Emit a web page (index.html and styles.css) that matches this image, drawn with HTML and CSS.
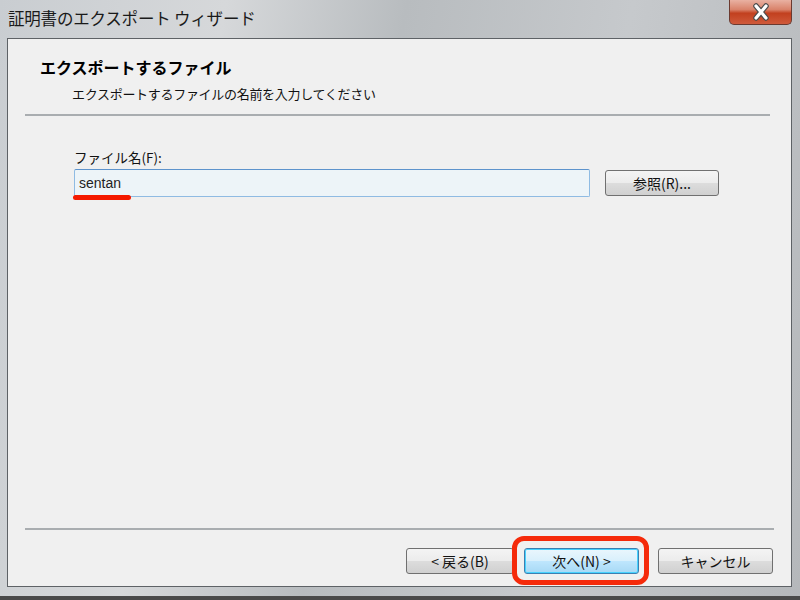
FILE: index.html
```html
<!DOCTYPE html>
<html lang="ja">
<head>
<meta charset="utf-8">
<title>証明書のエクスポート ウィザード</title>
<link rel="stylesheet" href="styles.css">
</head>
<body>
<div class="window">
  <div class="titlebar">
    <div class="title">証明書のエクスポート ウィザード</div>
    <div class="close">
      <svg width="26" height="18" viewBox="0 0 26 18">
        <path d="M8 3 L18 15 M18 3 L8 15" stroke="#4a4a4a" stroke-width="5.5" stroke-linecap="round"/>
        <path d="M8 3 L18 15 M18 3 L8 15" stroke="#ffffff" stroke-width="3.2" stroke-linecap="round"/>
      </svg>
    </div>
  </div>
  <div class="client">
    <div class="header">
      <div class="h-title">エクスポートするファイル</div>
      <div class="h-sub">エクスポートするファイルの名前を入力してください</div>
    </div>
    <div class="sep sep-top"></div>
    <div class="content">
      <div class="label">ファイル名(F):</div>
      <div class="row">
        <div class="input"><span class="value">sentan</span><span class="mark"></span></div>
        <div class="btn browse">参照(R)...</div>
      </div>
    </div>
    <div class="sep sep-bottom"></div>
    <div class="footer">
      <div class="btn back">&lt; 戻る(B)</div>
      <div class="btn next">次へ(N) &gt;<span class="ring"></span></div>
      <div class="btn cancel">キャンセル</div>
    </div>
  </div>
</div>
</body>
</html>
```
FILE: styles.css
```css
html, body {
  margin: 0;
  padding: 0;
}
body {
  width: 800px;
  height: 600px;
  overflow: hidden;
  font-family: "Noto Sans CJK JP", "Liberation Sans", sans-serif;
  color: #111;
}
.window {
  width: 800px;
  height: 600px;
  box-sizing: border-box;
  background: linear-gradient(100deg, #c9cdd1 0%, #d6d8da 25%, #b8bcbf 45%, #c6c9cc 70%, #b5b8bb 100%);
  display: flex;
  flex-direction: column;
  border-bottom: 4px solid #4a4a4a;
}
.titlebar {
  height: 38px;
  display: flex;
  justify-content: space-between;
  align-items: flex-start;
  flex: none;
}
.title {
  padding-left: 8px;
  padding-top: 6px;
  font-size: 16.5px;
  line-height: 24px;
  color: #1a1a1a;
  letter-spacing: -0.2px;
}
.close {
  margin-right: 8px;
  width: 63px;
  height: 25px;
  box-sizing: border-box;
  border: 1px solid #6b3a30;
  border-top: none;
  border-radius: 0 0 5px 5px;
  background: linear-gradient(#e9b1a2 0%, #d9826a 40%, #c2401f 55%, #cf5a3b 100%);
  display: flex;
  align-items: center;
  justify-content: center;
}
.client {
  margin: 0 8px 0 7px;
  height: 549px;
  box-sizing: border-box;
  border: 1px solid #5e6266;
  background: #f0f0f0;
  display: flex;
  flex-direction: column;
}
.header {
  padding: 18px 0 0 32px;
  height: 71px;
  box-sizing: border-box;
}
.h-title {
  font-size: 16px;
  font-weight: bold;
  line-height: 20px;
  color: #000;
}
.h-sub {
  margin-top: 8px;
  padding-left: 32px;
  font-size: 13px;
  line-height: 18px;
  letter-spacing: -0.3px;
}
.sep {
  height: 0;
  border-top: 2px solid #a9adb0;
  flex: none;
}
.sep-top {
  margin: 4px 21px 0 17px;
}
.sep-bottom {
  margin: 0 17px 0 17px;
}
.content {
  flex: 1;
  padding: 32px 0 0 66px;
  box-sizing: border-box;
}
.label {
  font-size: 13.5px;
  line-height: 18px;
  letter-spacing: 0;
}
.row {
  margin-top: 3px;
  display: flex;
  align-items: flex-start;
}
.input {
  position: relative;
  width: 516px;
  height: 28px;
  box-sizing: border-box;
  background: #edf4f8;
  border: 1px solid #8fbbe3;
  border-top-color: #5d93cc;
  border-radius: 2px;
  padding-left: 4px;
  display: flex;
  align-items: center;
}
.value {
  font-family: "Liberation Sans", "Noto Sans", sans-serif;
  font-size: 14px;
  color: #222;
}
.mark {
  position: absolute;
  left: -2px;
  top: 25px;
  width: 58px;
  height: 5px;
  border-radius: 3px;
  background: #f41a00;
}
.btn {
  height: 26px;
  box-sizing: border-box;
  border: 1px solid #707070;
  border-radius: 3px;
  background: linear-gradient(#f4f4f4 0%, #ececec 48%, #dcdcdc 52%, #d0d0d0 100%);
  font-size: 14px;
  display: flex;
  align-items: center;
  justify-content: center;
  letter-spacing: 0;
}
.browse {
  margin-left: 15px;
  margin-top: 1px;
  width: 114px;
}
.footer {
  height: 56px;
  box-sizing: border-box;
  display: flex;
  align-items: flex-start;
  padding: 18px 0 0 398px;
}
.back {
  width: 108px;
}
.next {
  position: relative;
  margin-left: 10px;
  width: 115px;
  border-color: #3c7fb1;
  background: linear-gradient(#eaf6fd 0%, #d9f0fc 48%, #bee6fd 52%, #a7d9f5 100%);
  box-shadow: inset 0 0 0 1px #48d2fe;
}
.ring {
  position: absolute;
  left: -13px;
  top: -13px;
  right: -11px;
  bottom: -12px;
  border: 5px solid #f52a0a;
  border-radius: 12px;
}
.cancel {
  margin-left: 19px;
  width: 115px;
}
```
